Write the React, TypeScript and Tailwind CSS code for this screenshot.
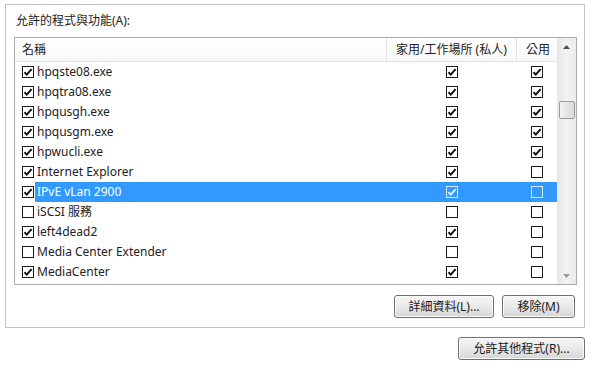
const rows = [
  { name: 'hpqste08.exe', on: true, home: true, pub: true },
  { name: 'hpqtra08.exe', on: true, home: true, pub: true },
  { name: 'hpqusgh.exe', on: true, home: true, pub: true },
  { name: 'hpqusgm.exe', on: true, home: true, pub: true },
  { name: 'hpwucli.exe', on: true, home: true, pub: true },
  { name: 'Internet Explorer', on: true, home: true, pub: false },
  { name: 'IPvE vLan 2900', on: true, home: true, pub: false },
  { name: 'iSCSI 服務', on: false, home: false, pub: false },
  { name: 'left4dead2', on: true, home: true, pub: false },
  { name: 'Media Center Extender', on: false, home: false, pub: false },
  { name: 'MediaCenter', on: true, home: true, pub: false },
]

const selected = 6

const CheckBox = ({ checked, light }: { checked: boolean; light?: boolean }) => (
  <span
    className={`flex h-[12px] w-[12px] shrink-0 items-center justify-center border ${
      light ? 'border-[#d6e8ff] bg-[#3399ff]' : 'border-[#1a1a1a] bg-white'
    }`}
  >
    {checked && (
      <svg width="10" height="10" viewBox="0 0 10 10">
        <path
          d="M1.5 5.2 L3.8 7.6 L8.6 2.2"
          fill="none"
          stroke={light ? '#e4f0ff' : '#111'}
          strokeWidth="2"
        />
      </svg>
    )}
  </span>
)

const WinButton = ({ label, width }: { label: string; width: string }) => (
  <button
    type="button"
    className={`${width} h-[23px] rounded-[3px] border border-[#707070] bg-gradient-to-b from-[#f6f6f6] via-[#e9e9e9] to-[#d6d6d6] text-[12px] text-[#1a1a1a] shadow-[inset_0_0_0_1px_#fcfcfc]`}
  >
    {label}
  </button>
)

export default function App() {
  return (
    <div
      className="h-[372px] w-[605px] bg-white pl-[5px] pt-[4px] text-[12px] text-[#222]"
      style={{ fontFamily: '"Noto Sans", "Noto Sans CJK TC", sans-serif' }}
    >
      <div className="flex h-[324px] w-[580px] flex-col border border-[#c4c4c4]">
        <div className="h-[32px] pl-[10px] pt-[8px] leading-[16px]">允許的程式與功能(A):</div>

        <div className="ml-[8px] flex h-[248px] w-[563px] border border-[#a9acb2]">
          <div className="flex w-[542px] flex-col">
            <div className="flex h-[24px] border-b border-[#e2e2e2] bg-gradient-to-b from-white to-[#f7f8fa] leading-[23px]">
              <div className="w-[372px] border-r border-[#e5e5e5] pl-[7px]">名稱</div>
              <div className="w-[130px] border-r border-[#e5e5e5] pl-[9px]">家用/工作場所 (私人)</div>
              <div className="w-[40px] pl-[9px]">公用</div>
            </div>
            {rows.map((r, i) => {
              const sel = i === selected
              return (
                <div key={r.name} className="flex h-[20px] items-center">
                  <div className="flex w-[20px] justify-end pr-[1px]">
                    <CheckBox checked={r.on} />
                  </div>
                  <div
                    className={`flex h-[20px] flex-1 items-center ${
                      sel ? 'bg-[#3399ff] text-white' : ''
                    }`}
                  >
                    <div className="w-[352px] pl-[2px] leading-[20px]">{r.name}</div>
                    <div className="flex w-[130px] justify-center">
                      <CheckBox checked={r.home} light={sel} />
                    </div>
                    <div className="flex w-[40px] justify-center">
                      <CheckBox checked={r.pub} light={sel} />
                    </div>
                  </div>
                </div>
              )
            })}
          </div>

          <div className="flex w-[19px] flex-col items-center bg-gradient-to-r from-[#e6e6e6] via-[#f2f2f2] to-[#ebebeb]">
            <div className="flex h-[17px] items-center justify-center">
              <svg width="7" height="4" viewBox="0 0 7 4">
                <path d="M0 4 L3.5 0 L7 4 Z" fill="#4d4d4d" />
              </svg>
            </div>
            <div className="mt-[46px] h-[18px] w-[16px] rounded-[2px] border border-[#9b9b9b] bg-gradient-to-r from-[#f3f3f3] to-[#d9d9d9]" />
            <div className="flex-1" />
            <div className="flex h-[17px] items-center justify-center">
              <svg width="7" height="4" viewBox="0 0 7 4">
                <path d="M0 0 L7 0 L3.5 4 Z" fill="#9a9a9a" />
              </svg>
            </div>
          </div>
        </div>

        <div className="mt-[10px] flex justify-end gap-[8px] pr-[9px]">
          <WinButton label="詳細資料(L)..." width="w-[100px]" />
          <WinButton label="移除(M)" width="w-[73px]" />
        </div>
      </div>

      <div className="mt-[9px] flex w-[580px] justify-end">
        <WinButton label="允許其他程式(R)..." width="w-[127px]" />
      </div>
    </div>
  )
}
